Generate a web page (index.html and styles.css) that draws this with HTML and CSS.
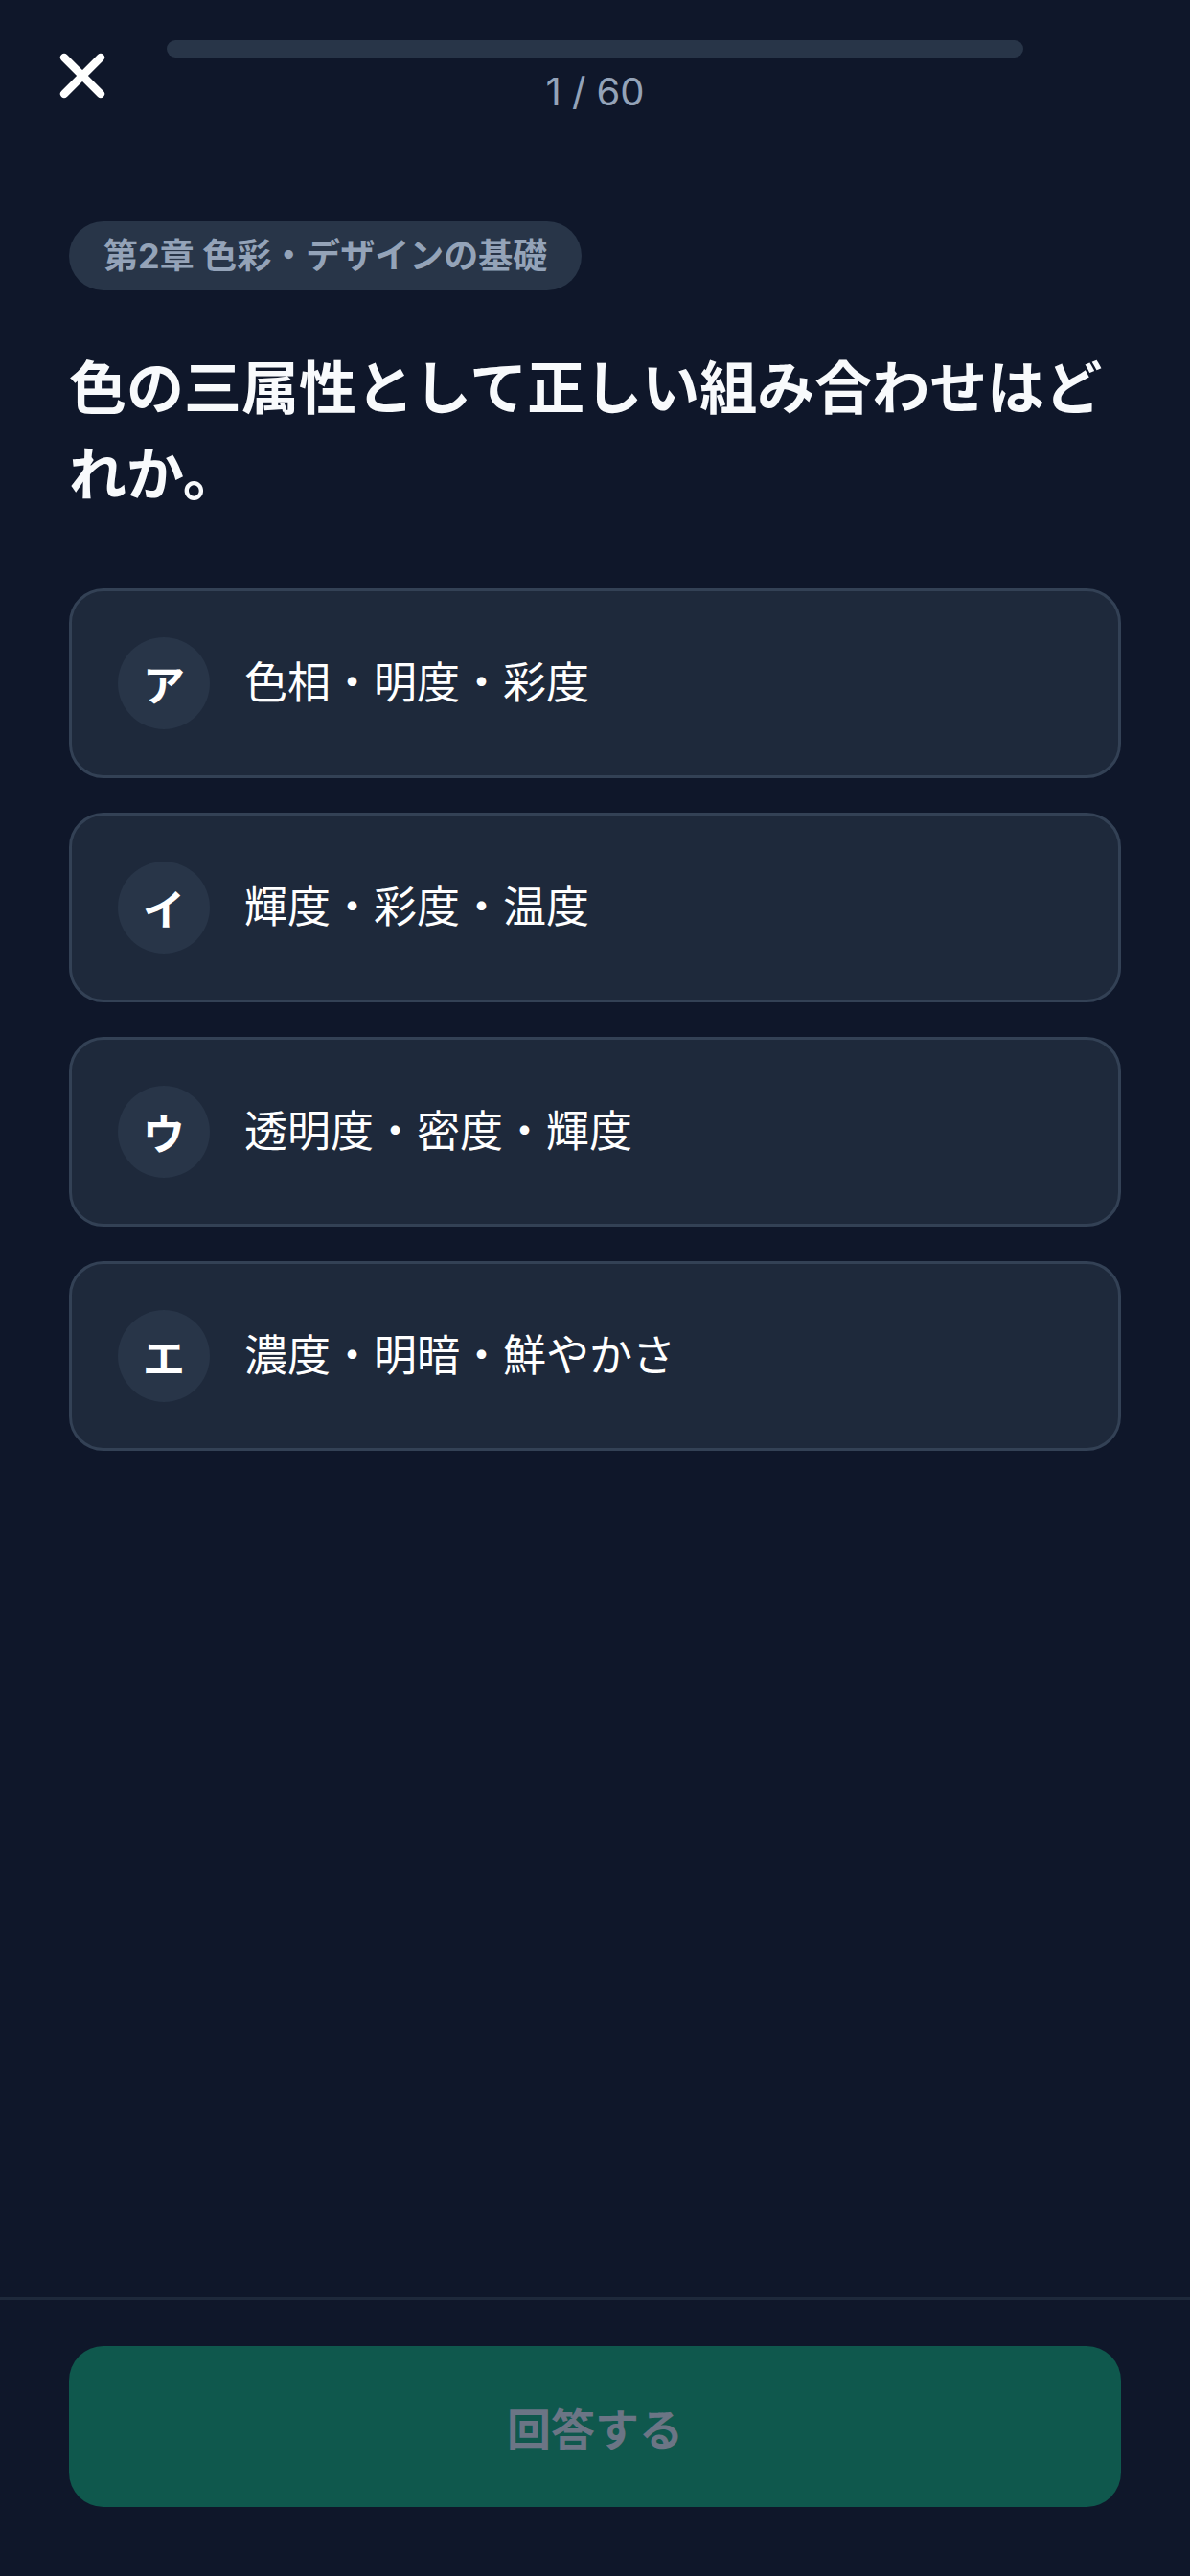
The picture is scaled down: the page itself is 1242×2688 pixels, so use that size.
FILE: index.html
```html
<!DOCTYPE html>
<html lang="ja">
<head>
    <meta charset="UTF-8">
    <meta name="viewport" content="width=device-width, initial-scale=1.0">
    <title>問題 1 / 60</title>
    <link rel="stylesheet" href="styles.css">
</head>
<body>
    <div class="screen">
        <header class="header">
            <button class="close-btn" aria-label="閉じる">
                <svg viewBox="0 0 24 24" width="76" height="76" fill="none" stroke="#ffffff" stroke-width="2.6" stroke-linecap="round">
                    <path d="M18 6 6 18"/>
                    <path d="M6 6l12 12"/>
                </svg>
            </button>
            <div class="progress">
                <div class="progress-track">
                    <div class="progress-fill"></div>
                </div>
                <div class="progress-count">1 / 60</div>
            </div>
            <div class="header-spacer"></div>
        </header>

        <main class="content">
            <div class="chapter">第2章 色彩・デザインの基礎</div>
            <h1 class="question">色の三属性として正しい組み合わせはどれか。</h1>

            <div class="options">
                <div class="option">
                    <span class="option-label">ア</span>
                    <span class="option-text">色相・明度・彩度</span>
                </div>
                <div class="option">
                    <span class="option-label">イ</span>
                    <span class="option-text">輝度・彩度・温度</span>
                </div>
                <div class="option">
                    <span class="option-label">ウ</span>
                    <span class="option-text">透明度・密度・輝度</span>
                </div>
                <div class="option">
                    <span class="option-label">エ</span>
                    <span class="option-text">濃度・明暗・鮮やかさ</span>
                </div>
            </div>
        </main>

        <footer class="footer">
            <button class="submit-btn" disabled>回答する</button>
        </footer>
    </div>
</body>
</html>
```

FILE: styles.css
```css
* {
    margin: 0;
    padding: 0;
    box-sizing: border-box;
    font-family: "Inter", "Noto Sans CJK JP", sans-serif;
}

body {
    background: #0f172a;
    color: #f8fafc;
    width: 1242px;
    height: 2688px;
    overflow: hidden;
}

.screen {
    display: flex;
    flex-direction: column;
    height: 100%;
}

.header {
    display: flex;
    align-items: flex-start;
    gap: 50px;
    padding: 42px 48px 0;
}

.close-btn {
    width: 76px;
    height: 76px;
    margin-top: -1px;
    background: none;
    border: none;
    display: flex;
    flex-shrink: 0;
}

.progress {
    flex: 1;
    display: flex;
    flex-direction: column;
    align-items: center;
}

.progress-track {
    width: 100%;
    height: 18px;
    border-radius: 9px;
    background: #283548;
    overflow: hidden;
}

.progress-fill {
    width: 0;
    height: 100%;
    background: #10b981;
}

.progress-count {
    margin-top: 8px;
    font-size: 40px;
    line-height: 56px;
    color: #94a3b8;
}

.header-spacer {
    width: 76px;
    flex-shrink: 0;
}

.content {
    flex: 1;
    padding: 107px 72px 0;
}

.chapter {
    display: inline-block;
    padding: 12px 36px;
    border-radius: 36px;
    background: #283548;
    color: #94a3b8;
    font-size: 36px;
    line-height: 48px;
    font-weight: bold;
}

.question {
    margin-top: 57px;
    margin-bottom: 74px;
    font-size: 60px;
    line-height: 90px;
    font-weight: bold;
    color: #f8fafc;
}

.options {
    display: flex;
    flex-direction: column;
    gap: 36px;
}

.option {
    display: flex;
    align-items: center;
    gap: 36px;
    padding: 48px;
    background: #1e293b;
    border: 3px solid #334155;
    border-radius: 36px;
}

.option-label {
    width: 96px;
    height: 96px;
    border-radius: 50%;
    background: #283548;
    display: flex;
    align-items: center;
    justify-content: center;
    font-size: 44px;
    font-weight: bold;
    color: #ffffff;
    flex-shrink: 0;
}

.option-text {
    font-size: 45px;
    line-height: 64px;
    color: #ffffff;
}

.footer {
    border-top: 3px solid #1e293b;
    padding: 48px 72px 72px;
}

.submit-btn {
    width: 100%;
    height: 168px;
    border: none;
    border-radius: 36px;
    background: #0f584d;
    color: #6b7585;
    font-size: 46px;
    font-weight: bold;
}
```
